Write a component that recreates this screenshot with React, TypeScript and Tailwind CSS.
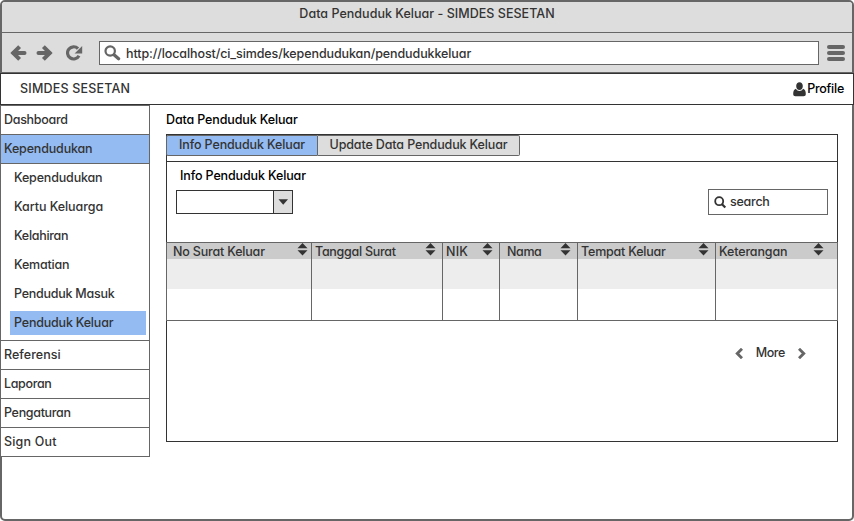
import type { ReactNode } from "react";

function ArrowLeft({ className = "" }: { className?: string }) {
  return (
    <svg className={className} width="17" height="16" viewBox="0 0 17 16" fill="none" stroke="#666" strokeWidth="4">
      <path d="M3.5 8h11" strokeLinecap="round" />
      <path d="M9.6 1.6L3.2 8l6.4 6.4" />
    </svg>
  );
}

function Sorter() {
  return (
    <svg width="11" height="13" viewBox="0 0 11 13" fill="#333">
      <path d="M5.5 0L10.5 5.2H0.5zM5.5 12.5L10.5 7.3H0.5z" />
    </svg>
  );
}

const subItems = [
  { name: "Kependudukan", tracking: "tracking-[-0.17px]" },
  { name: "Kartu Keluarga", tracking: "tracking-[-0.05px]" },
  { name: "Kelahiran", tracking: "tracking-[-0.28px]" },
  { name: "Kematian", tracking: "tracking-[-0.2px]" },
  { name: "Penduduk Masuk", tracking: "tracking-[-0.25px]" },
];

const lowerItems = [
  { name: "Referensi", tracking: "tracking-[0.03px]" },
  { name: "Laporan", tracking: "tracking-[-0.35px]" },
  { name: "Pengaturan", tracking: "tracking-[-0.32px]" },
  { name: "Sign Out", tracking: "tracking-[0.2px]" },
];

function Column({ className, pad, sort, children }: { className: string; pad: string; sort: string; children: ReactNode }) {
  return (
    <div className={`flex flex-col border-r border-[#666] ${className}`}>
      <div className={`relative h-4 bg-[#cbcbcb] leading-[18px] ${pad}`}>
        {children}
        <div className={`absolute top-0 ${sort}`}>
          <Sorter />
        </div>
      </div>
      <div className="h-[30px] bg-[#ededed]" />
    </div>
  );
}

export default function App() {
  return (
    <div className="flex h-[521px] w-[854px] flex-col rounded-[5px] border-2 border-[#666] bg-white font-['Inter','Liberation_Sans',sans-serif] text-[12.5px] font-[450] tracking-[-0.13px] whitespace-nowrap text-[#333] [font-feature-settings:'cv11']">
      <div className="h-[31px] rounded-t-[3px] border-b border-[#666] bg-[#ddd] text-center leading-[24px] tracking-[0.03px]">
        Data Penduduk Keluar - SIMDES SESETAN
      </div>
      <div className="flex h-10 border-b border-[#666] bg-[#ddd]">
        <ArrowLeft className="mt-3 ml-2" />
        <ArrowLeft className="mt-3 ml-[9px] rotate-180" />
        <svg className="mt-3 ml-[13px]" width="17" height="16" viewBox="0 0 17 16">
          <path d="M13 10.8A6.1 6.1 0 1 1 12 3.6" fill="none" stroke="#666" strokeWidth="3.2" />
          <path d="M16.2 1v7.4H8.6z" fill="#666" />
        </svg>
        <div className="mt-2 ml-4 flex h-6 w-[720px] border border-[#666] bg-white">
          <svg className="mt-[3px] ml-1" width="17" height="16" viewBox="0 0 17 16" fill="none" stroke="#666">
            <circle cx="6.2" cy="6" r="4.7" strokeWidth="2.2" />
            <path d="M10 9.8l4.6 4" strokeWidth="3.2" strokeLinecap="round" />
          </svg>
          <span className="ml-[5px] leading-[24px] tracking-[-0.1px]">
            http://localhost/ci_simdes/kependudukan/pendudukkeluar
          </span>
        </div>
        <div className="mt-3 ml-2 flex flex-col gap-[2px]">
          <div className="h-1 w-[18px] rounded-full bg-[#666]" />
          <div className="h-1 w-[18px] rounded-full bg-[#666]" />
          <div className="h-1 w-[18px] rounded-full bg-[#666]" />
        </div>
      </div>
      <div className="-mx-[2px] flex h-8 justify-between border border-[#333] bg-white leading-[30px]">
        <span className="ml-[19px] tracking-[0.2px]">SIMDES SESETAN</span>
        <div className="mr-[9px] flex tracking-[-0.25px] text-black">
          <svg className="mt-2 mr-px" width="13" height="15" viewBox="0 0 13 15" fill="#333">
            <path d="M3.2 4C3.2 1.6 4.6 0.2 6.5 0.2S9.8 1.6 9.8 4 8.4 8 6.5 8 3.2 6.4 3.2 4zM2.9 6.8C3.8 8.3 5 9 6.5 9s2.7-.7 3.6-2.2c1.9.5 2.7 2.5 2.7 5.2 0 1.5-.9 2.2-2.2 2.2H2.4C1.1 14.2.2 13.5.2 12c0-2.7.8-4.7 2.7-5.2z" />
          </svg>
          <span>Profile</span>
        </div>
      </div>
      <div className="flex flex-1">
        <div className="-ml-[2px] h-[352px] w-[150px] border border-[#666] bg-white">
          <div className="h-[29px] border-b border-[#666] pl-[3px] leading-[28px] tracking-[-0.3px]">Dashboard</div>
          <div className="h-[29px] border-b border-[#666] bg-[#94bbf2] pl-[3px] leading-[28px] tracking-[-0.17px]">
            Kependudukan
          </div>
          <div className="h-[177px] border-b border-[#666]">
            {subItems.map((item) => (
              <div key={item.name} className={`h-[29px] pl-[13px] leading-[28px] ${item.tracking}`}>
                {item.name}
              </div>
            ))}
            <div className="mt-[2px] mr-[3px] ml-[9px] h-6 bg-[#94bbf2] pl-1 leading-[24px] tracking-[-0.2px]">
              Penduduk Keluar
            </div>
          </div>
          {lowerItems.map((item) => (
            <div key={item.name} className={`h-[29px] border-b border-[#666] pl-[3px] leading-[28px] ${item.tracking}`}>
              {item.name}
            </div>
          ))}
        </div>
        <div className="ml-4 flex w-[672px] flex-col">
          <div className="h-[29px] leading-[30px] text-black">Data Penduduk Keluar</div>
          <div className="flex h-[308px] flex-col border border-[#333]">
            <div className="flex h-[27px] border-b border-[#333]">
              <div className="-ml-px flex h-[21px] text-center leading-[18px]">
                <div className="w-[152px] rounded-l-[2px] border border-[#666] bg-[#94bbf2]">Info Penduduk Keluar</div>
                <div className="w-[202px] rounded-r-[2px] border border-l-0 border-[#666] bg-[#ddd]">
                  Update Data Penduduk Keluar
                </div>
              </div>
            </div>
            <div className="h-[28px] pl-[13px] leading-[28px] text-black">Info Penduduk Keluar</div>
            <div className="flex h-[52px] items-start justify-between pr-[9px] pl-[9px]">
              <div className="flex h-6 w-[117px] border border-[#333]">
                <div className="flex-1" />
                <div className="flex w-[19px] items-center justify-center border-l border-[#333] bg-[#ddd]">
                  <svg width="10" height="6" viewBox="0 0 10 6" fill="#333">
                    <path d="M0.5 0.3h9.5L5.2 5.7z" />
                  </svg>
                </div>
              </div>
              <div className="-mt-px flex h-[26px] w-[120px] border border-[#666]">
                <svg className="mt-1.5 ml-[5px]" width="13" height="13" viewBox="0 0 13 13" fill="none" stroke="#333" strokeWidth="1.8">
                  <circle cx="5.2" cy="5.2" r="4" />
                  <path d="M7.8 8l3.5 3.5" strokeWidth="2.2" />
                </svg>
                <span className="ml-[3px] leading-[24px] tracking-[-0.25px]">search</span>
              </div>
            </div>
            <div className="-mx-px flex h-[79px] border border-[#666]">
              <Column className="w-[145px] tracking-[-0.18px]" pad="pl-[6px]" sort="right-[3px]">No Surat Keluar</Column>
              <Column className="w-[131px] tracking-[-0.27px]" pad="pl-[3px]" sort="right-[6px]">Tanggal Surat</Column>
              <Column className="w-[57px] tracking-[0.2px]" pad="pl-[3px]" sort="right-[6px]">NIK</Column>
              <Column className="w-[78px] tracking-[-0.4px]" pad="pl-[7px]" sort="right-[6px]">Nama</Column>
              <Column className="w-[138px] tracking-[-0.2px]" pad="pl-[3px]" sort="right-[6px]">Tempat Keluar</Column>
              <Column className="flex-1 border-r-0" pad="pl-[3px]" sort="right-[13px]">Keterangan</Column>
            </div>
            <div className="mt-[22px] mr-[31px] flex h-5 items-center justify-end leading-5">
              <svg width="8" height="11" viewBox="0 0 8 11" fill="none" stroke="#666" strokeWidth="2.9">
                <path d="M7 0.8L2.3 5.5 7 10.2" />
              </svg>
              <span className="mx-[13px] tracking-[-0.4px]">More</span>
              <svg width="8" height="11" viewBox="0 0 8 11" fill="none" stroke="#666" strokeWidth="2.9">
                <path d="M1 0.8l4.7 4.7L1 10.2" />
              </svg>
            </div>
          </div>
        </div>
      </div>
    </div>
  );
}
